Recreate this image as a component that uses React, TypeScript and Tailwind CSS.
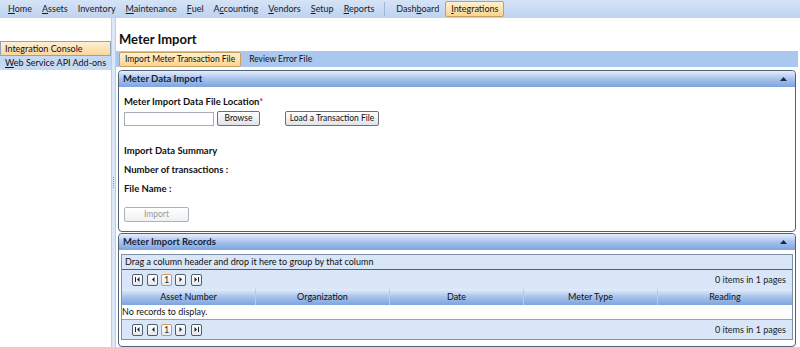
import React from "react";

const font = { fontFamily: 'Lato, "Open Sans", sans-serif' };

const navItems = [
  { pre: "", u: "H", post: "ome" },
  { pre: "", u: "A", post: "ssets" },
  { pre: "", u: "", post: "Inventory" },
  { pre: "", u: "M", post: "aintenance" },
  { pre: "", u: "F", post: "uel" },
  { pre: "A", u: "c", post: "counting" },
  { pre: "", u: "V", post: "endors" },
  { pre: "", u: "S", post: "etup" },
  { pre: "", u: "R", post: "eports" },
];

const columns = ["Asset Number", "Organization", "Date", "Meter Type", "Reading"];

const PagerBtn = ({ children, active }: { children: React.ReactNode; active?: boolean }) => (
  <div
    className={`flex h-[12px] w-[11px] items-center justify-center rounded-[2px] border bg-gradient-to-b from-white to-[#e3e9f1] text-[9px] leading-none ${
      active ? "border-[#d29a5a] text-[#333]" : "border-[#4d5d74] text-[#222]"
    }`}
  >
    {children}
  </div>
);

const Pager = () => (
  <div className="flex h-[19px] items-center justify-between pl-[10px] pr-[6px]">
    <div className="flex items-center">
      <PagerBtn>
        <svg width="5" height="5" viewBox="0 0 5 5"><rect x="0" y="0" width="1" height="5" fill="#222" /><path d="M4.5 0 L2 2.5 L4.5 5 Z" fill="#222" /></svg>
      </PagerBtn>
      <div className="ml-[4px]">
        <PagerBtn>
          <svg width="4" height="5" viewBox="0 0 4 5"><path d="M3.5 0 L1 2.5 L3.5 5 Z" fill="#222" /></svg>
        </PagerBtn>
      </div>
      <div className="ml-[3px]">
        <PagerBtn active>1</PagerBtn>
      </div>
      <div className="ml-[3px]">
        <PagerBtn>
          <svg width="4" height="5" viewBox="0 0 4 5"><path d="M0.5 0 L3 2.5 L0.5 5 Z" fill="#222" /></svg>
        </PagerBtn>
      </div>
      <div className="ml-[5px]">
        <PagerBtn>
          <svg width="5" height="5" viewBox="0 0 5 5"><path d="M0.5 0 L3 2.5 L0.5 5 Z" fill="#222" /><rect x="4" y="0" width="1" height="5" fill="#222" /></svg>
        </PagerBtn>
      </div>
    </div>
    <span className="text-[9px] text-[#222]">0 items in 1 pages</span>
  </div>
);

const PanelHeader = ({ title }: { title: string }) => (
  <div className="flex h-[16px] items-center justify-between rounded-t-[4px] bg-gradient-to-b from-[#e6eefa] via-[#a6c2ec] to-[#7da4df] pl-[4px] pr-[8px]">
    <span className="text-[9.5px] font-bold text-[#15243a]">{title}</span>
    <svg width="7" height="4" viewBox="0 0 7 4"><path d="M0 4 L3.5 0 L7 4 Z" fill="#1b2a44" /></svg>
  </div>
);

export default function App() {
  return (
    <div className="flex h-[347px] w-[800px] flex-col overflow-hidden bg-white text-[#111]" style={font}>
      {/* top menu */}
      <div className="flex h-[18px] items-center bg-gradient-to-b from-[#d5e3f6] to-[#bed3f0] pl-[8px] text-[9px] text-[#1a1a1a]">
        {navItems.map((n, i) => (
          <span key={i} className="mr-[10px]">
            {n.pre}
            {n.u && <span className="underline">{n.u}</span>}
            {n.post}
          </span>
        ))}
        <div className="mr-[11px] h-[14px] w-px bg-[#9fb6d6]" />
        <span className="mr-[6px]">
          Dash<span className="underline">b</span>oard
        </span>
        <span className="rounded-[2px] border border-[#c7a15c] bg-gradient-to-b from-[#fff0cf] to-[#fbd48f] px-[5px] leading-[14px]">
          <span className="underline">I</span>ntegrations
        </span>
      </div>

      <div className="flex flex-1">
        {/* sidebar */}
        <div className="w-[111px] pt-[23px]">
          <div className="border border-[#8fa2bf] bg-gradient-to-b from-[#fdeed3] to-[#fbd69b] pl-[4px] text-[9px] leading-[13px]">
            Integration Console
          </div>
          <div className="whitespace-nowrap bg-[#c5d9f2] pl-[5px] text-[9px] leading-[14px]">
            <span className="underline">W</span>eb Service API Add-ons
          </div>
        </div>

        {/* splitter */}
        <div className="flex w-[5px] flex-col items-center justify-center border-x border-[#b9cde9] bg-[#dce8f7]">
          <div className="flex flex-col gap-[1px]">
            {[0, 1, 2, 3, 4, 5].map((d) => (
              <div key={d} className="h-px w-px bg-[#7d93b5]" />
            ))}
          </div>
        </div>

        {/* content */}
        <div className="flex flex-1 flex-col">
          <div className="pl-[3px] pt-[12px] text-[13px] font-bold leading-[18px] text-[#111]">Meter Import</div>
          <div className="mr-[2px] mt-[3px] flex h-[16px] items-center bg-[#aac7ef] pl-[3px] text-[8.5px]">
            <span className="rounded-[2px] border border-[#c7a15c] bg-gradient-to-b from-[#fff0cf] to-[#fbd48f] px-[5px] leading-[13px]">
              Import Meter Transaction File
            </span>
            <span className="ml-[8px]">Review Error File</span>
          </div>

          {/* Meter Data Import panel */}
          <div className="ml-[2px] mr-[4px] mt-[3px] h-[162px] rounded-[4px] border border-[#4f6079] bg-white">
            <PanelHeader title="Meter Data Import" />
            <div className="px-[5px] pt-[8px] text-[9.5px]">
              <div className="font-bold leading-[14px]">
                Meter Import Data File Location<span className="text-[#d33]">*</span>
              </div>
              <div className="mt-[2px] flex items-center">
                <div className="h-[14px] w-[90px] border border-[#a5acb5] bg-white" />
                <div className="ml-[3px] flex h-[15px] w-[43px] items-center justify-center rounded-[2px] border border-[#707070] bg-gradient-to-b from-white to-[#dfe3e8] text-[8.5px]">
                  Browse
                </div>
                <div className="ml-[25px] flex h-[15px] w-[94px] items-center justify-center rounded-[2px] border border-[#707070] bg-gradient-to-b from-white to-[#dfe3e8] text-[8.5px]">
                  Load a Transaction File
                </div>
              </div>
              <div className="mt-[18px] font-bold leading-[14px]">Import Data Summary</div>
              <div className="mt-[5px] font-bold leading-[14px]">Number of transactions :</div>
              <div className="mt-[5px] font-bold leading-[14px]">File Name :</div>
              <div className="mt-[11px] flex h-[15px] w-[65px] items-center justify-center rounded-[2px] border border-[#adb2b8] bg-gradient-to-b from-white to-[#eef0f2] text-[8.5px] text-[#9a9a9a]">
                Import
              </div>
            </div>
          </div>

          {/* Meter Import Records panel */}
          <div className="ml-[2px] mr-[4px] mt-[1px] flex-1 rounded-[4px] border border-[#4f6079] bg-white">
            <PanelHeader title="Meter Import Records" />
            <div className="mx-[2px] mt-[4px] border border-[#7f8fa6] bg-[#d8e6f7] text-[9px]">
              <div className="flex h-[15px] items-center border-b border-[#4f6079] pl-[3px]">
                Drag a column header and drop it here to group by that column
              </div>
              <Pager />
              <div className="grid h-[16px] grid-cols-5 bg-gradient-to-b from-[#e6eefa] via-[#a6c2ec] to-[#7da4df]">
                {columns.map((c, i) => (
                  <div key={c} className={`flex items-center justify-center ${i < 4 ? "border-r border-[#b7cbe8]" : ""}`}>
                    {c}
                  </div>
                ))}
              </div>
              <div className="flex h-[15px] items-center border-b border-[#8fa3bf] bg-white">No records to display.</div>
              <Pager />
            </div>
          </div>
        </div>
      </div>
    </div>
  );
}
